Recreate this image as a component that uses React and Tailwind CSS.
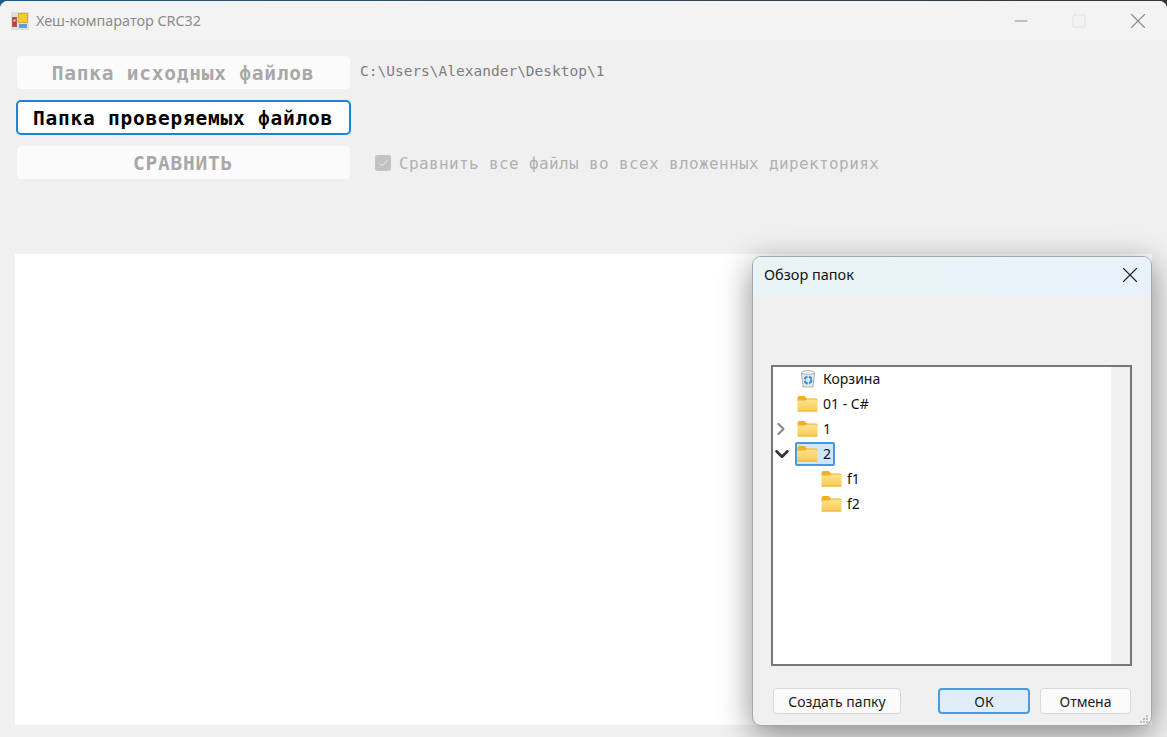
import { Check, ChevronDown, ChevronRight, Minus, Square, X } from 'lucide-react';

const mono = 'font-["DejaVu_Sans_Mono","Liberation_Mono",monospace]';

function AppIcon() {
  return (
    <svg width="18" height="18" viewBox="0 0 18 18">
      <rect x="0" y="0" width="18" height="18" fill="#dedede" />
      <rect x="7.5" y="1.5" width="9" height="9" fill="#f7cb2e" stroke="#d8aa30" />
      <rect x="1.5" y="5.5" width="4" height="9" fill="#cc3a3e" stroke="#b05a5a" />
      <rect x="2.5" y="7.5" width="2" height="2" fill="#f0d0d0" />
      <rect x="8.5" y="12.5" width="7" height="3" fill="#5a9ae4" stroke="#6f9ccf" />
    </svg>
  );
}

function Folder() {
  return (
    <svg width="21" height="17" viewBox="0 0 21 17" className="shrink-0">
      <defs>
        <linearGradient id="folderBody" x1="0" y1="0" x2="0" y2="1">
          <stop offset="0" stopColor="#fde28e" />
          <stop offset="1" stopColor="#f9cb52" />
        </linearGradient>
      </defs>
      <path d="M0.5 3 Q0.5 1 2.5 1 H7.5 L10 3.5 H19 Q20.5 3.5 20.5 5 V7 H0.5 Z" fill="#f2b01e" />
      <path d="M0.5 5.5 H8 L10 4.5 H19 Q20.5 4.5 20.5 6 V15 Q20.5 16.5 19 16.5 H2 Q0.5 16.5 0.5 15 Z" fill="url(#folderBody)" />
      <path d="M0.5 16 H20.5" stroke="#eeb03a" />
    </svg>
  );
}

function RecycleBin() {
  return (
    <svg width="16" height="18" viewBox="0 0 16 18" className="shrink-0">
      <path d="M1.5 3 L3 17 H13 L14.5 3 Z" fill="#e4e8ec" stroke="#a9b0b8" />
      <ellipse cx="8" cy="2.5" rx="6.5" ry="1.8" fill="#f4f6f8" stroke="#a9b0b8" />
      <circle cx="8" cy="10" r="3.4" fill="none" stroke="#2f8fdc" strokeWidth="2" strokeDasharray="4 1.5" />
    </svg>
  );
}

function TreeRow({ label, indent, chevron, selected, icon }) {
  return (
    <div className={`flex h-[25px] items-center ${indent ? 'pl-[48px]' : 'pl-[24px]'}`}>
      <div className="relative flex items-center">
        {chevron === 'right' && <ChevronRight size={20} strokeWidth={2.6} className="absolute left-[-26px] text-[#8a8a8a]" />}
        {chevron === 'down' && <ChevronDown size={22} strokeWidth={2.8} className="absolute left-[-26px] text-[#333333]" />}
        {selected && <div className="absolute left-[-2px] top-[-3px] h-[24px] w-[40px] rounded-[2px] border-2 border-[#4a97dc] bg-[#cce8ff]" />}
        <div className="relative flex items-center gap-[5px]">
          {icon === 'bin' ? <div className="flex w-[21px] justify-center"><RecycleBin /></div> : <Folder />}
          <span className="text-[14px] leading-none text-[#111111]">{label}</span>
        </div>
      </div>
    </div>
  );
}

function MainButton({ children, active }) {
  return (
    <button
      className={`flex h-[35px] w-[335px] items-center justify-center rounded-[5px] pr-[1px] pt-[2px] ${mono} text-[19.5px] font-bold tracking-[0.76px] whitespace-pre ${
        active ? 'border-2 border-[#1a83dc] bg-white text-black' : 'border border-[#f0f0f0] bg-[#fbfbfb] bg-clip-padding text-[#a8a8a8]'
      }`}
    >
      {children}
    </button>
  );
}

function DialogButton({ children, width, primary }) {
  return (
    <button
      className={`h-[26px] rounded-[4px] text-[14px] text-[#1a1a1a] ${width} ${
        primary ? 'border-2 border-[#4f9ade] bg-[#e0edf9]' : 'border border-[#d8d8d8] bg-[#fbfbfb]'
      }`}
    >
      {children}
    </button>
  );
}

function BrowseDialog() {
  return (
    <div className="absolute left-[752px] top-[255px] flex h-[470px] w-[400px] flex-col overflow-hidden rounded-[9px] border border-[#a8a8a8] bg-[#f0f0f0] shadow-[0_8px_32px_rgba(0,0,0,0.45)]">
      <div className="flex h-[38px] shrink-0 items-center justify-between bg-gradient-to-r from-[#e9f4f6] to-[#e9f2fb] pb-[3px] pl-[11px] pr-[8px]">
        <span className="text-[14.5px] text-[#111111]">Обзор папок</span>
        <X size={26} strokeWidth={1} className="text-[#222222]" />
      </div>
      <div className="ml-[18px] mt-[70px] flex h-[301px] w-[361px] border-2 border-[#777777] bg-white">
        <div className="-mt-px flex-1">
          <TreeRow label="Корзина" icon="bin" />
          <TreeRow label="01 - C#" />
          <TreeRow label="1" chevron="right" />
          <TreeRow label="2" chevron="down" selected />
          <TreeRow label="f1" indent />
          <TreeRow label="f2" indent />
        </div>
        <div className="w-[19px] bg-[#f0f0f0]" />
      </div>
      <div className="relative mt-[22px] flex pl-[20px]">
        <DialogButton width="w-[128px]">Создать папку</DialogButton>
        <div className="ml-[37px] flex gap-[10px]">
          <DialogButton width="w-[92px]" primary>ОК</DialogButton>
          <DialogButton width="w-[91px]">Отмена</DialogButton>
        </div>
      </div>
      <div className="absolute bottom-[2px] right-[3px] grid grid-cols-3 gap-[1px]">
        {[0, 0, 1, 0, 1, 1, 1, 1, 1].map((on, i) => (
          <div key={i} className={`h-[2px] w-[2px] ${on ? 'bg-[#bdbdbd]' : ''}`} />
        ))}
      </div>
    </div>
  );
}

export default function App() {
  return (
    <div className="h-[737px] w-[1167px] overflow-hidden bg-gradient-to-r from-[#1d5a85] to-[#333333] pt-px font-['Noto_Sans',sans-serif]">
      <div className="relative flex h-[736px] flex-col overflow-hidden rounded-t-[8px] bg-[#f0f0f0]">
        {/* Title bar */}
        <div className="flex h-[39px] shrink-0 items-center bg-[#f3f3f3] pl-[11px]">
          <AppIcon />
          <span className="ml-[7px] text-[14.4px] text-[#8b8b8b]">Хеш-компаратор CRC32</span>
          <div className="ml-auto flex items-center">
            <Minus size={20} strokeWidth={1.2} className="mr-[40px] text-[#8a8a8a]" />
            <Square size={16} strokeWidth={1.2} className="mr-[38px] text-[#dcdcdc]" />
            <X size={26} strokeWidth={1} className="mr-[16px] text-[#8a8a8a]" />
          </div>
        </div>

        {/* Form */}
        <div className="flex flex-col gap-[10px] pl-[16px] pt-[15px]">
          <div className="flex items-start">
            <MainButton>Папка исходных файлов</MainButton>
            <span className={`ml-[9px] mt-[6px] ${mono} text-[14.5px] leading-5 text-[#7d7d7d]`}>C:\Users\Alexander\Desktop\1</span>
          </div>
          <MainButton active>Папка проверяемых файлов</MainButton>
          <div className="flex items-center">
            <MainButton>СРАВНИТЬ</MainButton>
            <div className="ml-[24px] mt-[1px] flex h-[16px] w-[16px] items-center justify-center rounded-[3px] bg-[#c2c2c2]">
              <Check size={11} strokeWidth={2} className="text-[#f2f2f2]" />
            </div>
            <span className={`ml-[8px] mt-[3px] ${mono} text-[16px] tracking-[0.37px] text-[#b0b0b0]`}>Сравнить все файлы во всех вложенных директориях</span>
          </div>
        </div>

        {/* Results panel */}
        <div className="ml-[15px] mt-[74px] h-[471px] w-[1137px] bg-white" />

        <BrowseDialog />
      </div>
    </div>
  );
}
